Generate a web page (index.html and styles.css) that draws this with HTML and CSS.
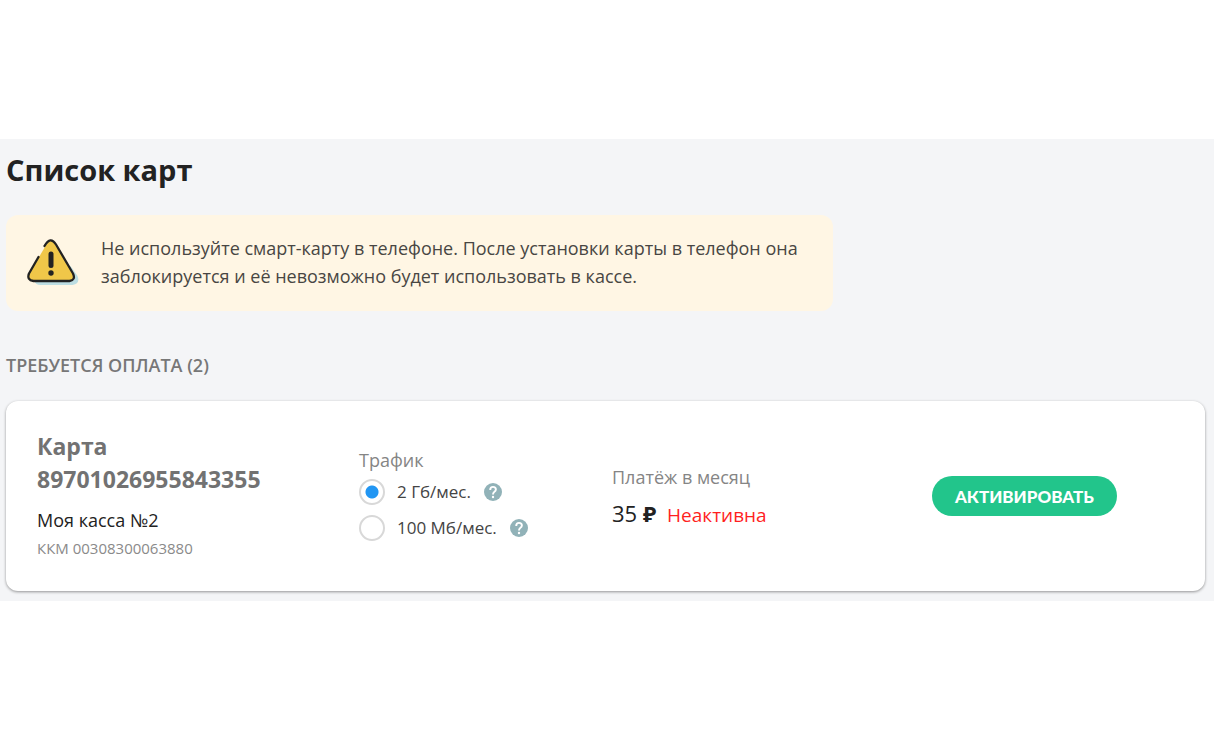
FILE: index.html
```html
<!DOCTYPE html>
<html lang="ru">
<head>
<meta charset="utf-8">
<meta name="viewport" content="width=device-width, initial-scale=1">
<title>Список карт</title>
<link rel="stylesheet" href="styles.css">
</head>
<body>
<main class="cards-page">
  <h1 class="page-title">Список карт</h1>

  <div class="notice">
    <svg class="notice-icon" viewBox="0 0 52 48" aria-hidden="true">
      <path d="M8 43 Q9 47 14 47 H46 Q54 46 51 38 L44 28 Z" fill="#bcdde2"/>
      <path d="M20.500 5.500 Q24.500 -.500 28.500 5.500 L46.500 36 Q49 42 43 43 H6 Q0 42 2.500 36 Z" fill="#f0c749"/>
      <path d="M18 8 Q24 -2.500 29.500 6.500 L46.500 35.500 Q49.500 42 43 43 H7 Q0 42 2.500 35.500 L12 19" fill="none" stroke="#222" stroke-width="2.300" stroke-linecap="round" stroke-linejoin="round"/>
      <path d="M24.500 16 V27.500" stroke="#222" stroke-width="5" stroke-linecap="round"/>
      <circle cx="24.500" cy="35" r="2.700" fill="#222"/>
    </svg>
    <p class="notice-text">Не используйте смарт-карту в телефоне. После установки карты в телефон она заблокируется и её невозможно будет использовать в кассе.</p>
  </div>

  <h2 class="group-title">ТРЕБУЕТСЯ ОПЛАТА (2)</h2>

  <article class="card">
    <div class="card-info">
      <h3 class="card-title">Карта<br>89701026955843355</h3>
      <p class="card-name">Моя касса №2</p>
      <p class="card-kkm">ККМ 00308300063880</p>
    </div>

    <fieldset class="traffic">
      <legend class="caption">Трафик</legend>
      <div class="option">
        <input class="radio" type="radio" name="traffic" id="traffic-2gb" checked>
        <label for="traffic-2gb">2 Гб/мес.</label>
        <button class="help" type="button" aria-label="Подробнее о тарифе 2 Гб">
          <svg viewBox="0 0 18 18" aria-hidden="true"><circle cx="9" cy="9" r="9" fill="#91b2b8"/><path d="M6.200 7 Q6.200 3.900 9 3.900 Q11.900 3.900 11.900 6.500 Q11.900 7.900 10.200 9 Q9 9.900 9 11.400" fill="none" stroke="#fff" stroke-width="1.900"/><circle cx="9" cy="14" r="1.200" fill="#fff"/></svg>
        </button>
      </div>
      <div class="option">
        <input class="radio" type="radio" name="traffic" id="traffic-100mb">
        <label for="traffic-100mb">100 Мб/мес.</label>
        <button class="help" type="button" aria-label="Подробнее о тарифе 100 Мб">
          <svg viewBox="0 0 18 18" aria-hidden="true"><circle cx="9" cy="9" r="9" fill="#91b2b8"/><path d="M6.200 7 Q6.200 3.900 9 3.900 Q11.900 3.900 11.900 6.500 Q11.900 7.900 10.200 9 Q9 9.900 9 11.400" fill="none" stroke="#fff" stroke-width="1.900"/><circle cx="9" cy="14" r="1.200" fill="#fff"/></svg>
        </button>
      </div>
    </fieldset>

    <div class="payment">
      <p class="caption">Платёж в месяц</p>
      <p class="price-row"><span class="price">35 <span class="ruble">₽</span></span><span class="status">Неактивна</span></p>
    </div>

    <div class="actions">
      <button class="activate" type="button">АКТИВИРОВАТЬ</button>
    </div>
  </article>
</main>
</body>
</html>
```
FILE: styles.css
```css
* {
  box-sizing: border-box;
}

body {
  display: flex;
  flex-direction: column;
  justify-content: center;
  min-height: 100vh;
  margin: 0;
  background: #fff;
  color: #222;
  font-family: "Open Sans", "Noto Sans", sans-serif;
  font-size: 18px;
  line-height: 28px;
}

h1, h2, h3, p {
  margin: 0;
}

.cards-page {
  padding: 11px 9px 10px 6px;
  background: #f4f5f7;
}

.page-title {
  font-size: 29px;
  line-height: 40px;
  font-weight: 700;
}

.notice {
  display: flex;
  align-items: center;
  gap: 22px;
  width: 69%;
  margin-top: 25px;
  padding: 19px 20px 21px;
  border-radius: 12px;
  background: #fff6e4;
}

.notice-icon {
  flex: none;
  width: 53px;
  height: 48px;
}

.notice-text {
  color: #484643;
}

.group-title {
  margin: 40px 0 22px;
  color: #777;
  font-size: 18px;
  font-weight: 600;
}

.card {
  display: grid;
  grid-template-columns: 322fr 253fr 320fr 242fr;
  align-items: center;
  padding: 29px 31px;
  border-radius: 12px;
  background: #fff;
  box-shadow: 0 1px 3px rgba(0, 0, 0, 0.4);
}

.card-title {
  margin-bottom: 10px;
  color: #727272;
  font-size: 23px;
  line-height: 33px;
  font-weight: 700;
}

.card-kkm {
  color: #8a8a8a;
  font-size: 15px;
}

.caption {
  padding: 0;
  color: #858585;
}

.traffic {
  margin: 0;
  padding: 0;
  border: 0;
  color: #444;
}

.option {
  display: flex;
  align-items: center;
  height: 36px;
  font-size: 17px;
}

.radio {
  appearance: none;
  width: 26px;
  height: 26px;
  margin: 0 12px 0 0;
  border: 2px solid #d8d8d8;
  border-radius: 50%;
  background: #fff;
}

.radio:checked {
  background: radial-gradient(circle, #2196f3 6px, #fff 7px);
}

.help {
  width: 18px;
  height: 18px;
  margin-left: 13px;
  padding: 0;
  border: 0;
  background: none;
  cursor: pointer;
}

.help svg {
  display: block;
}

.price-row {
  display: flex;
  align-items: baseline;
  gap: 11px;
  margin-top: 8px;
}

.price {
  font-size: 22px;
  font-weight: 500;
}

.ruble {
  font-weight: 700;
}

.status {
  color: #ff1f1f;
  font-size: 19px;
}

.activate {
  height: 40px;
  padding: 0 23px;
  border: 0;
  border-radius: 20px;
  background: #22c58b;
  color: #fff;
  font-family: Lato, "Open Sans", sans-serif;
  font-size: 17px;
  font-weight: 900;
  cursor: pointer;
}
```
